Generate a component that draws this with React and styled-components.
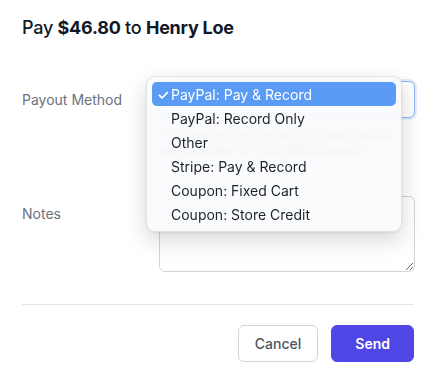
import React from 'react';
import styled, { createGlobalStyle } from 'styled-components';

const Global = createGlobalStyle`
	body {
		margin: 0;
		background: #ffffff;
		font-family: Inter, "Noto Sans", sans-serif;
		-webkit-font-smoothing: antialiased;
	}
`;

const Modal = styled.div`
	width: 434px;
	height: 373px;
	box-sizing: border-box;
	padding: 14px 20px 0 22px;
`;

const Title = styled.h2`
	margin: 0;
	font-size: 18px;
	line-height: 28px;
	font-weight: 500;
	color: #111827;
	letter-spacing: -0.25px;

	b {
		font-weight: 700;
	}
`;

const Form = styled.div`
	display: grid;
	grid-template-columns: 137px 256px;
	row-gap: 38px;
	margin-top: 39px;
`;

const Label = styled.div`
	font-size: 14px;
	line-height: 20px;
	color: #6b7280;
	padding-top: ${(p) => p.$top}px;
`;

const Field = styled.div`
	position: relative;
`;

const SelectBox = styled.div`
	height: 37px;
	box-sizing: border-box;
	border: 1px solid #8fb1f7;
	border-radius: 6px;
	box-shadow: 0 0 0 2px #e6edfb;
	background: #fff;
`;

const Help = styled.p`
	margin: 8px 0 0;
	width: 236px;
	font-size: 12px;
	line-height: 16px;
	color: #9ca3af;
`;

const TextArea = styled.textarea`
	display: block;
	width: 256px;
	height: 76px;
	box-sizing: border-box;
	border: 1px solid #d1d5db;
	border-radius: 6px;
	font-family: inherit;
	font-size: 14px;
	outline: none;
`;

const Popup = styled.ul`
	position: absolute;
	left: -13px;
	top: -5px;
	width: 256px;
	margin: 0;
	padding: 5px;
	box-sizing: border-box;
	list-style: none;
	background: rgba(249, 250, 251, 0.86);
	backdrop-filter: blur(3px);
	border: 1px solid rgba(0, 0, 0, 0.1);
	border-radius: 9px;
	box-shadow: 0 8px 22px rgba(0, 0, 0, 0.16), 0 1px 3px rgba(0, 0, 0, 0.08);
	z-index: 2;
`;

const Option = styled.li`
	display: flex;
	align-items: center;
	height: 24px;
	padding-left: 5px;
	border-radius: 5px;
	font-size: 14px;
	color: ${(p) => (p.$active ? '#ffffff' : '#1f2328')};
	background: ${(p) => (p.$active ? '#5a9bf6' : 'transparent')};
`;

const Check = styled.span`
	width: 14px;
	font-size: 14px;
	font-weight: 600;
`;

const Divider = styled.hr`
	margin: 32px 0 0;
	border: none;
	border-top: 1px solid #e5e7eb;
	width: 392px;
`;

const Actions = styled.div`
	display: flex;
	justify-content: flex-end;
	gap: 13px;
	width: 392px;
	margin-top: 20px;
`;

const Button = styled.button`
	height: 37px;
	padding: 0 ${(p) => (p.$primary ? 23 : 16)}px;
	border-radius: 6px;
	font-family: inherit;
	font-size: 14px;
	font-weight: ${(p) => (p.$primary ? 600 : 500)};
	color: ${(p) => (p.$primary ? '#ffffff' : '#4b5563')};
	background: ${(p) => (p.$primary ? '#4f46e5' : '#ffffff')};
	border: 1px solid ${(p) => (p.$primary ? '#4f46e5' : '#d1d5db')};
`;

const options = [
	'PayPal: Pay & Record',
	'PayPal: Record Only',
	'Other',
	'Stripe: Pay & Record',
	'Coupon: Fixed Cart',
	'Coupon: Store Credit',
];

const App = () => {
	return (
		<Modal>
			<Global />
			<Title>
				Pay <b>$46.80</b> to <b>Henry Loe</b>
			</Title>
			<Form>
				<Label $top={9}>Payout Method</Label>
				<Field>
					<SelectBox />
					<Help>The payment will be sent through PayPal and recorded for this referral payout.</Help>
					<Popup>
						{options.map((o, i) => (
							<Option key={o} $active={i === 0}>
								<Check>{i === 0 ? '✓' : ''}</Check>
								{o}
							</Option>
						))}
					</Popup>
				</Field>
				<Label $top={8}>Notes</Label>
				<Field>
					<TextArea />
				</Field>
			</Form>
			<Divider />
			<Actions>
				<Button>Cancel</Button>
				<Button $primary>Send</Button>
			</Actions>
		</Modal>
	);
};

export default App;
